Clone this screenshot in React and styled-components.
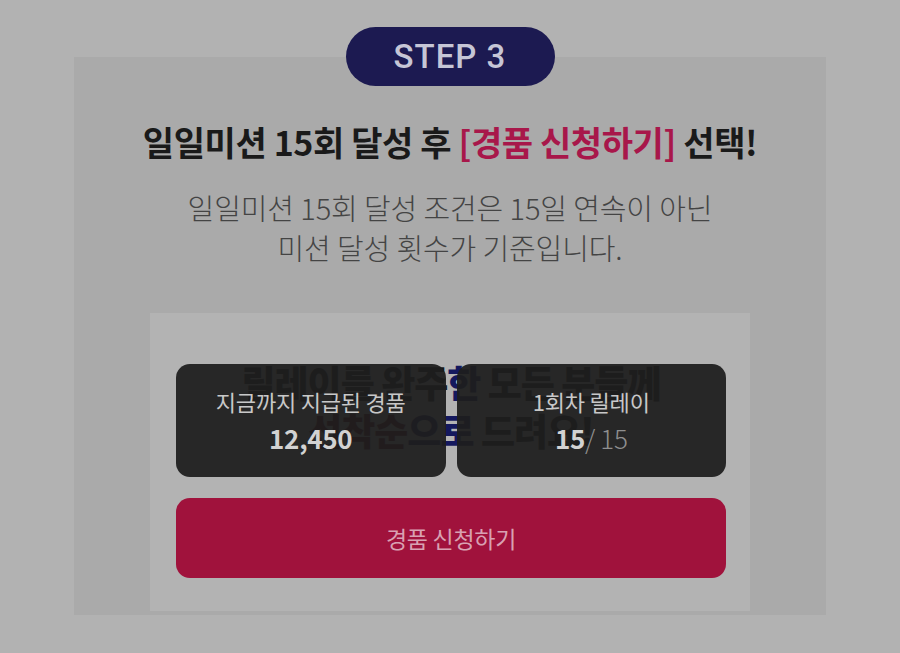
import styled, { createGlobalStyle } from "styled-components";

const GlobalStyle = createGlobalStyle`
    html, body {
        margin: 0;
        padding: 0;
        background: #b2b2b2;
    }
    body {
        font-family: "Noto Sans CJK KR", "Noto Sans", sans-serif;
    }
`

const Page = styled.div`
    width: 900px;
    height: 653px;
    overflow: hidden;
    display: flex;
    flex-direction: column;
    align-items: center;
    padding-top: 27px;
    box-sizing: border-box;
`

const Panel = styled.section`
    width: 752px;
    margin-top: -29px;
    padding: 61px 75px 4px;
    box-sizing: border-box;
    background: #aaaaaa;
    display: flex;
    flex-direction: column;
    align-items: center;
`

const StepBadge = styled.div`
    position: relative;
    z-index: 1;
    width: 209px;
    height: 59px;
    border-radius: 30px;
    background: #1c1a51;
    color: #c6c6d6;
    font-family: Roboto, "Liberation Sans", Arial, sans-serif;
    font-size: 33px;
    font-weight: 500;
    display: flex;
    align-items: center;
    justify-content: center;
    letter-spacing: 1px;
`

const Title = styled.h2`
    margin: 0;
    font-size: 34px;
    font-weight: 700;
    letter-spacing: -0.4px;
    color: #1a1a1a;
    line-height: 48px;
    white-space: nowrap;
`

const Accent = styled.span`
    color: ${p => p.$color || "#a8174a"};
`

const Desc = styled.p`
    margin: 21px 0 0;
    font-size: 29px;
    font-weight: 300;
    letter-spacing: -0.1px;
    line-height: 40px;
    color: #444444;
    text-align: center;
    white-space: nowrap;
`

const InnerBox = styled.div`
    width: 600px;
    margin-top: 46px;
    padding: 51px 24px 33px 26px;
    box-sizing: border-box;
    background: #b3b3b3;
    display: flex;
    flex-direction: column;
    gap: 21px;
`

const Stack = styled.div`
    display: grid;
    & > * {
        grid-area: 1 / 1;
    }
`

const HiddenCopy = styled.div`
    margin-top: -6px;
    font-size: 37px;
    font-weight: 900;
    line-height: 48px;
    letter-spacing: -1px;
    color: #161616;
    text-align: center;
    white-space: nowrap;
`

const CardRow = styled.div`
    display: grid;
    grid-template-columns: 1fr 1fr;
    gap: 11px;
`

const Card = styled.div`
    height: 113px;
    border-radius: 14px;
    background: rgba(30, 30, 30, 0.94);
    display: flex;
    flex-direction: column;
    align-items: center;
    justify-content: center;
    gap: 3px;
`

const CardLabel = styled.div`
    font-size: 22px;
    color: #c8c8c8;
    letter-spacing: -0.2px;
    line-height: 32px;
`

const CardValue = styled.div`
    font-size: 26px;
    font-weight: 700;
    color: #d2d2d2;
    line-height: 36px;
    letter-spacing: -0.3px;
`

const Light = styled.span`
    font-weight: 300;
    color: #8f8f8f;
`

const ApplyButton = styled.button`
    height: 80px;
    border: none;
    border-radius: 14px;
    background: #a0123c;
    color: #d9a1b2;
    font-family: "Noto Sans CJK KR", "Noto Sans", sans-serif;
    font-size: 23px;
    letter-spacing: -0.3px;
    padding: 0;
`

export default function App() {
    return (
        <>
            <GlobalStyle />
            <Page>
                <StepBadge>STEP 3</StepBadge>
                <Panel>
                    <Title>
                        일일미션 15회 달성 후 <Accent>[경품 신청하기]</Accent> 선택!
                    </Title>
                    <Desc>
                        일일미션 15회 달성 조건은 15일 연속이 아닌<br />
                        미션 달성 횟수가 기준입니다.
                    </Desc>
                    <InnerBox>
                        <Stack>
                            <HiddenCopy aria-hidden="true">
                                릴레이를 완주<Accent $color="#14185e">한</Accent> 모든 분들께<br />
                                <Accent $color="#5a0a1e">선착순</Accent><Accent $color="#14185e">으로</Accent> 드려요!
                            </HiddenCopy>
                            <CardRow>
                                <Card>
                                    <CardLabel>지금까지 지급된 경품</CardLabel>
                                    <CardValue>12,450</CardValue>
                                </Card>
                                <Card>
                                    <CardLabel>1회차 릴레이</CardLabel>
                                    <CardValue>15<Light>/ 15</Light></CardValue>
                                </Card>
                            </CardRow>
                        </Stack>
                        <ApplyButton>경품 신청하기</ApplyButton>
                    </InnerBox>
                </Panel>
            </Page>
        </>
    )
}
